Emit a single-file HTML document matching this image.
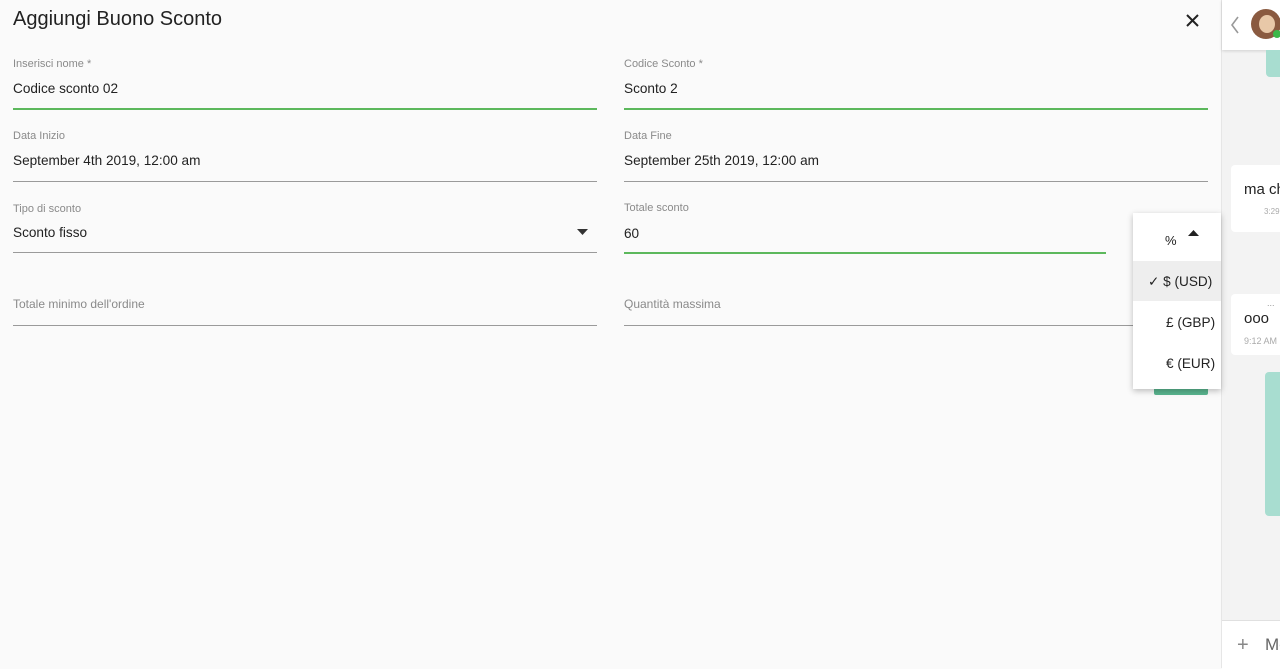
<!DOCTYPE html>
<html><head><style>
body{margin:0;width:1280px;height:668px;background:#fafafa;font-family:"Liberation Sans",sans-serif;position:relative;overflow:hidden}
.a{position:absolute;white-space:nowrap}
.lab{position:absolute;font-size:11px;color:#8a8a8a;white-space:nowrap}
.val{position:absolute;font-size:13.6px;color:#222;white-space:nowrap}
.ln{position:absolute;height:1px;background:#9a9a9a}
.gl{position:absolute;height:2px;background:#5cb85c}
</style></head><body>
<div class="a" style="left:13px;top:8px;font-size:20px;color:#222">Aggiungi Buono Sconto</div>
<svg class="a" style="left:1186px;top:14px" width="13" height="13"><path d="M1 1L12 12M12 1L1 12" stroke="#222" stroke-width="2"/></svg>

<div class="lab" style="left:13px;top:58px">Inserisci nome *</div>
<div class="val" style="left:13px;top:81px">Codice sconto 02</div>
<div class="gl" style="left:13px;top:108px;width:584px"></div>
<div class="lab" style="left:624px;top:58px">Codice Sconto *</div>
<div class="val" style="left:624px;top:81px">Sconto 2</div>
<div class="gl" style="left:624px;top:108px;width:584px"></div>

<div class="lab" style="left:13px;top:130px">Data Inizio</div>
<div class="val" style="left:13px;top:153px">September 4th 2019, 12:00 am</div>
<div class="ln" style="left:13px;top:181px;width:584px"></div>
<div class="lab" style="left:624px;top:130px">Data Fine</div>
<div class="val" style="left:624px;top:153px">September 25th 2019, 12:00 am</div>
<div class="ln" style="left:624px;top:181px;width:584px"></div>

<div class="lab" style="left:13px;top:203px">Tipo di sconto</div>
<div class="val" style="left:13px;top:225px">Sconto fisso</div>
<svg class="a" style="left:577px;top:229px" width="12" height="7"><path d="M0 0H11L5.5 6Z" fill="#333"/></svg>
<div class="ln" style="left:13px;top:252px;width:584px"></div>
<div class="lab" style="left:624px;top:202px">Totale sconto</div>
<div class="val" style="left:624px;top:226px">60</div>
<div class="gl" style="left:624px;top:252px;width:482px"></div>

<div class="lab" style="left:13px;top:297px;font-size:12px">Totale minimo dell'ordine</div>
<div class="ln" style="left:13px;top:325px;width:584px"></div>
<div class="lab" style="left:624px;top:297px;font-size:12px">Quantità massima</div>
<div class="ln" style="left:624px;top:325px;width:584px"></div>
<div class="a" style="left:1154px;top:386px;width:54px;height:9px;background:#5ab58f;border-radius:2px"></div>

<!-- right panel -->
<div class="a" style="left:1221px;top:0;width:59px;height:668px;background:#f3f3f3;border-left:1px solid #e6e6e6"></div>
<div class="a" style="left:1222px;top:0;width:58px;height:50px;background:#fff;box-shadow:0 1px 3px rgba(0,0,0,.15)"></div>
<svg class="a" style="left:1230px;top:16px" width="10" height="18"><path d="M8 1L2 9L8 17" stroke="#999" stroke-width="1.6" fill="none"/></svg>
<div class="a" style="left:1251px;top:9px;width:30px;height:30px;border-radius:50%;background:#8a5a40"></div>
<div class="a" style="left:1259px;top:15px;width:16px;height:18px;border-radius:50%;background:#e8c8a8"></div>
<div class="a" style="left:1273px;top:30px;width:8px;height:8px;border-radius:50%;background:#3cb84a"></div>
<div class="a" style="left:1266px;top:50px;width:20px;height:27px;background:#a8ddd0;border-radius:0 0 4px 4px"></div>
<div class="a" style="left:1231px;top:165px;width:60px;height:67px;background:#fff;border-radius:4px"></div>
<div class="a" style="left:1244px;top:181px;font-size:15px;color:#222">ma ch</div>
<div class="a" style="left:1264px;top:207px;font-size:8px;color:#aaa">3:29</div>
<div class="a" style="left:1231px;top:294px;width:60px;height:61px;background:#fff;border-radius:4px"></div>
<div class="a" style="left:1267px;top:298px;font-size:9px;color:#999">...</div>
<div class="a" style="left:1244px;top:310px;font-size:15px;color:#222">ooo</div>
<div class="a" style="left:1244px;top:336px;font-size:9px;color:#aaa">9:12 AM</div>
<div class="a" style="left:1265px;top:372px;width:20px;height:144px;background:#a8ddd0;border-radius:4px"></div>
<div class="a" style="left:1222px;top:620px;width:58px;height:48px;background:#fff;border-top:1px solid #e0e0e0"></div>
<div class="a" style="left:1237px;top:634px;font-size:20px;color:#888">+</div>
<div class="a" style="left:1265px;top:635px;font-size:17px;color:#666">Me</div>

<!-- dropdown -->
<div class="a" style="left:1133px;top:213px;width:88px;height:176px;background:#fff;box-shadow:0 2px 6px rgba(0,0,0,.25)">
<div class="a" style="left:32px;top:20px;font-size:13px;color:#222">%</div>
<svg class="a" style="left:55px;top:17px" width="11" height="6"><path d="M0 6H11L5.5 0Z" fill="#222"/></svg>
<div class="a" style="left:0;top:48px;width:88px;height:40px;background:#eeeeee"></div>
<div class="a" style="left:15px;top:61px;font-size:13.6px;color:#222">✓ $ (USD)</div>
<div class="a" style="left:33px;top:102px;font-size:13.6px;color:#222">£ (GBP)</div>
<div class="a" style="left:33px;top:143px;font-size:13.6px;color:#222">€ (EUR)</div>
</div>
</body></html>
